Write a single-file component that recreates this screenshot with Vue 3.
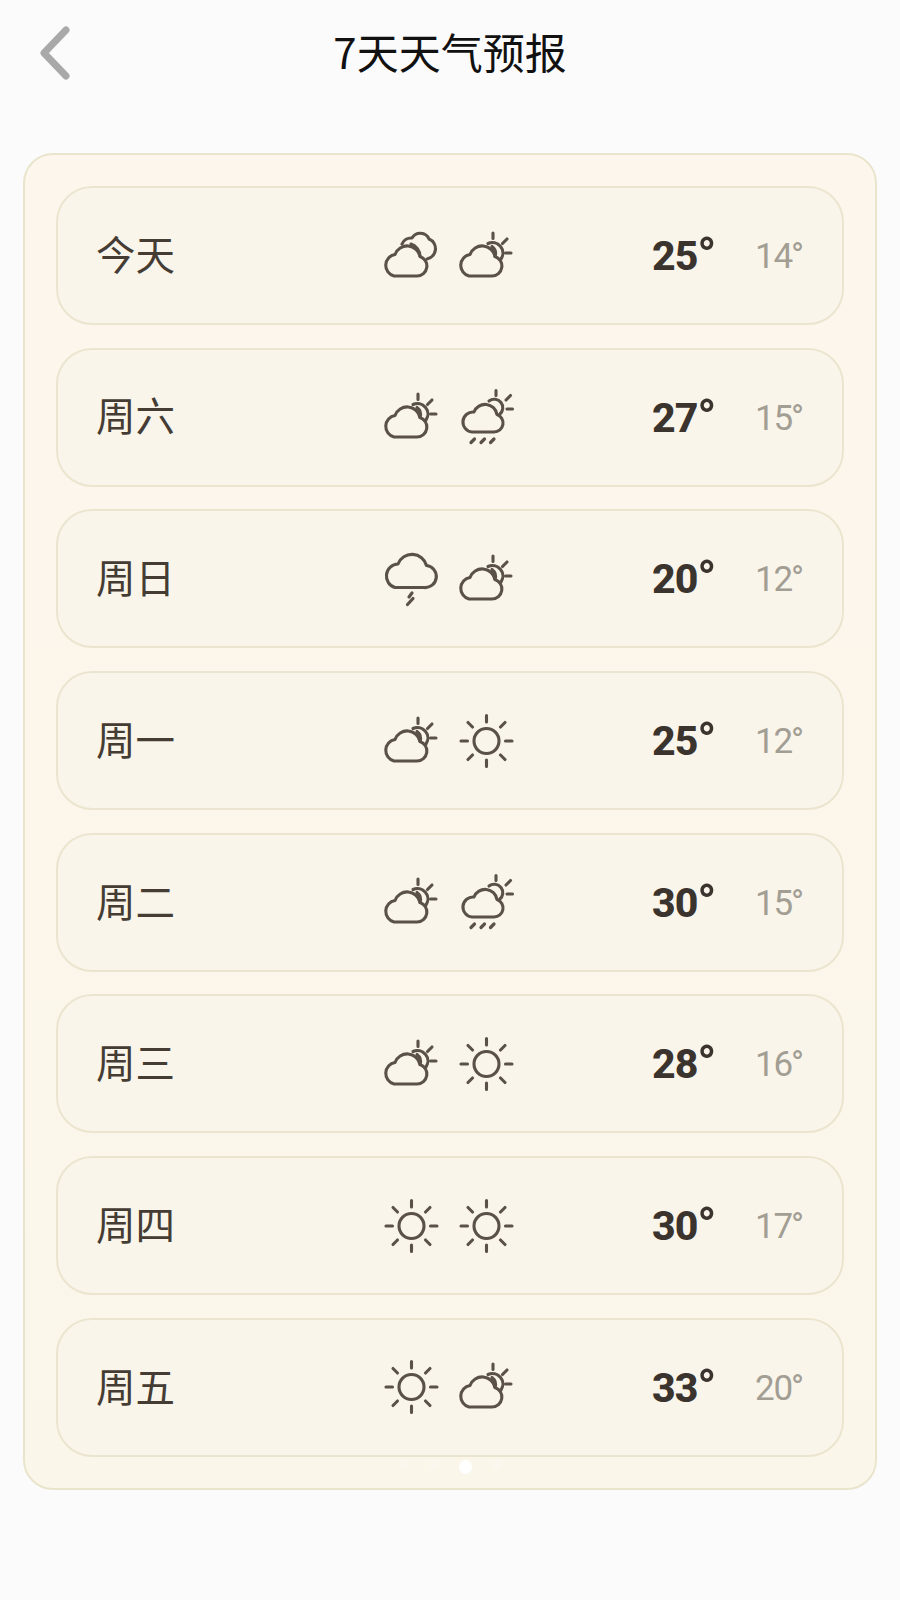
<script setup>
const days = [
  { name: '今天', am: 'cloudy', pm: 'partly', high: 25, low: 14 },
  { name: '周六', am: 'partly', pm: 'shower', high: 27, low: 15 },
  { name: '周日', am: 'rain', pm: 'partly', high: 20, low: 12 },
  { name: '周一', am: 'partly', pm: 'sunny', high: 25, low: 12 },
  { name: '周二', am: 'partly', pm: 'shower', high: 30, low: 15 },
  { name: '周三', am: 'partly', pm: 'sunny', high: 28, low: 16 },
  { name: '周四', am: 'sunny', pm: 'sunny', high: 30, low: 17 },
  { name: '周五', am: 'sunny', pm: 'partly', high: 33, low: 20 }
]

const cloud = 'M13 48H36a10 10 0 0 0 3-19.5A13 13 0 0 0 14 26.5A11 11 0 0 0 13 48Z'
</script>

<template>
  <div class="page">
    <header class="header">
      <svg class="back" viewBox="0 0 32 54" width="32" height="54">
        <path d="M27 4 5 27l22 23" />
      </svg>
      <h1 class="title">7天天气预报</h1>
    </header>

    <section class="card">
      <div v-for="day in days" :key="day.name" class="row">
        <span class="name">{{ day.name }}</span>
        <div class="icons">
          <svg v-for="(type, i) in [day.am, day.pm]" :key="i" class="icon" viewBox="0 0 56 56" width="56" height="56">
            <g v-if="type === 'cloudy'">
              <path :d="cloud" />
              <path d="M21 16A10 10 0 0 1 31 10A9.5 9.5 0 0 1 48 11A10.5 10.5 0 0 1 46 31" />
              <path d="M30 16A13 13 0 0 1 39 28" />
            </g>
            <g v-else-if="type === 'partly'">
              <path :d="cloud" />
              <path d="M32 15.5A10.5 10.5 0 0 1 45 31" />
              <path d="M36 18.5A9 9 0 0 1 39 28.5" />
              <path d="M37 5v5.5M46.5 15.5l4.5-4.5M49.5 25H55" />
            </g>
            <g v-else-if="type === 'shower'" transform="translate(1 0)">
              <path d="M15 43H37a9 9 0 0 0 3-17.5A12 12 0 0 0 17 23A10 10 0 0 0 15 43Z" />
              <path d="M32 12A8.5 8.5 0 1 1 42.5 25.5" />
              <path d="M39 1.5v5M49 11l4.5-4.5M50 20h5.5" />
              <path class="drops" d="M17.5 50l-3.5 3.5M27.5 50 24 53.5M37 50l-3.5 3.5" />
            </g>
            <g v-else-if="type === 'rain'">
              <path d="M14 36.5H43a11 11 0 0 0 2.5-22A15 15 0 0 0 17 13A12 12 0 0 0 14 36.5Z" />
              <path class="drops" d="M31 42l-3 4M32 47.5l-5.5 6" />
            </g>
            <g v-else transform="translate(2.5 0)">
              <circle cx="28" cy="28" r="12.5" />
              <path d="M28 2.5v6.5M28 47v6.5M2.5 28H9M47 28h6.5M9.5 9.5l4.5 4.5M46.5 9.5 42 14M9.5 46.5 14 42M46.5 46.5 42 42" />
            </g>
          </svg>
        </div>
        <span class="high">{{ day.high }}<span class="deg">°</span></span>
        <span class="low">{{ day.low }}<span class="deg">°</span></span>
      </div>
      <div class="dots">
        <i class="dot"></i>
        <i class="dot"></i>
        <i class="dot active"></i>
        <i class="dot"></i>
      </div>
    </section>
  </div>
</template>

<style>
html,
body {
  margin: 0;
  background: #fcfcfc;
}
</style>

<style scoped>
.page {
  height: 1600px;
  overflow: hidden;
  background: linear-gradient(180deg, #fbfbfb 0%, #fcfbfb 100%);
  font-family: "Noto Sans CJK SC", "Noto Sans", sans-serif;
}

.header {
  display: grid;
  grid-template-columns: 1fr auto 1fr;
  align-items: center;
  height: 106px;
  padding: 0 0 0 39px;
  margin-bottom: 47px;
}

.back {
  fill: none;
  stroke: #a9a9a9;
  stroke-width: 7;
  stroke-linecap: round;
  stroke-linejoin: round;
}

.title {
  margin: 0 39px 4px 0;
  font-size: 42px;
  font-weight: 400;
  color: #111;
  line-height: 1;
}

.card {
  position: relative;
  box-sizing: border-box;
  display: flex;
  flex-direction: column;
  gap: 22.7px;
  width: 854px;
  height: 1337px;
  margin: 0 23px;
  padding: 31px;
  background: linear-gradient(180deg, #fcf6ec 0%, #fbf6ea 100%);
  border: 2px solid #e9e5cd;
  border-radius: 30px;
}

.row {
  box-sizing: border-box;
  display: flex;
  align-items: center;
  height: 139px;
  padding-left: 38px;
  background: #f9f5eb;
  border: 2px solid #ebe5cf;
  border-radius: 36px;
}

.name {
  width: 285px;
  margin-bottom: 6px;
  font-size: 39.5px;
  color: #453c34;
  line-height: 1;
}

.icons {
  display: flex;
  gap: 19px;
  width: 131px;
}

.icon {
  flex: none;
  overflow: visible;
  fill: none;
  stroke: #5a5148;
  stroke-width: 3.1;
  stroke-linecap: round;
  stroke-linejoin: round;
}

.drops {
  stroke-width: 3.2;
}

.high {
  width: 103px;
  margin-left: 140px;
  padding-top: 2px;
  font-family: Roboto, "Noto Sans", sans-serif;
  font-size: 41px;
  font-weight: 800;
  letter-spacing: -1px;
  color: #3b332d;
  line-height: 1;
}

.low {
  padding-top: 2px;
  font-family: Roboto, "Noto Sans", sans-serif;
  font-size: 35px;
  letter-spacing: -1.2px;
  color: #a39e94;
  line-height: 1;
}

.deg {
  font-size: 1.2em;
  font-weight: 700;
  line-height: 0;
  vertical-align: -3px;
}

.low .deg {
  margin-left: -1px;
  font-size: 1em;
  font-weight: 400;
  vertical-align: 0;
}

.dots {
  position: absolute;
  left: 0;
  right: 0;
  bottom: 14px;
  display: flex;
  justify-content: center;
  gap: 20px;
}

.dot {
  width: 10px;
  height: 10px;
  border-radius: 50%;
  background: rgba(255, 255, 255, 0.2);
}

.dot.active {
  width: 13px;
  height: 14px;
  background: #fff;
}
</style>
